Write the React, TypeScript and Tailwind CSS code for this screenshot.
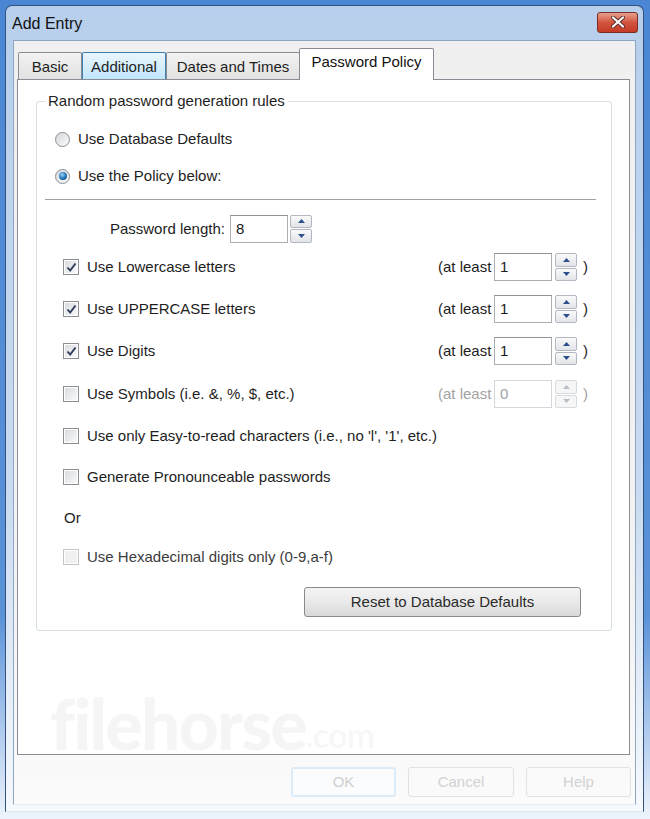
import React from 'react';

const font = "font-['Liberation_Sans',Arial,sans-serif]";

function Spinner({ disabled = false }: { disabled?: boolean }) {
  const arrow = disabled ? '#b8bec6' : '#2d4f8e';
  const half = `flex-1 flex items-center justify-center rounded-[2px] border ${
    disabled ? 'border-[#d6dbe0] bg-[#f6f6f6]' : 'border-[#b1b8c2] bg-gradient-to-b from-[#fafafa] to-[#e2e4e8]'
  }`;
  return (
    <div className="flex flex-col w-[22px] h-[28px] gap-px">
      <div className={half}>
        <svg width="7" height="4" viewBox="0 0 7 4"><path d="M0 4 L3.5 0 L7 4 Z" fill={arrow} /></svg>
      </div>
      <div className={half}>
        <svg width="7" height="4" viewBox="0 0 7 4"><path d="M0 0 L3.5 4 L7 0 Z" fill={arrow} /></svg>
      </div>
    </div>
  );
}

function NumBox({ value, width, disabled = false }: { value: string; width: string; disabled?: boolean }) {
  return (
    <div
      className={`${width} h-[28px] flex items-center pl-[5px] bg-white border ${
        disabled ? 'border-[#d4d7dc] text-[#9ea3a8]' : 'border-[#abadb3] border-t-[#8e9299] text-[#1a1a1a]'
      }`}
    >
      {value}
    </div>
  );
}

function Check({ checked = false, disabled = false }: { checked?: boolean; disabled?: boolean }) {
  return (
    <div
      className={`w-[16px] h-[16px] border flex items-center justify-center ${
        disabled ? 'border-[#c2c5c9]' : 'border-[#8b8f94]'
      }`}
    >
      <div
        className={`w-[12px] h-[12px] flex items-center justify-center ${
          disabled ? 'bg-[#f0f0f0]' : 'bg-gradient-to-br from-[#d9dcdf] to-[#f9f9fa]'
        }`}
      >
        {checked && (
          <svg width="11" height="11" viewBox="0 0 11 11">
            <path d="M1.5 5.5 L4.2 8.6 L9.5 1.5" fill="none" stroke="#2f3a5c" strokeWidth="1.9" />
          </svg>
        )}
      </div>
    </div>
  );
}

function Radio({ checked = false }: { checked?: boolean }) {
  return (
    <div className="w-[15px] h-[15px] rounded-full border border-[#8a8e93] bg-gradient-to-br from-[#d6d8db] to-[#fbfbfb] flex items-center justify-center">
      {checked && (
        <div className="w-[8px] h-[8px] rounded-full bg-[radial-gradient(circle_at_40%_35%,#9fd6f7,#1f6fb5_55%,#0b3d73)]" />
      )}
    </div>
  );
}

function AtLeast({ value, disabled = false }: { value: string; disabled?: boolean }) {
  const c = disabled ? 'text-[#a3a3a3]' : 'text-[#1e1e1e]';
  return (
    <div className="ml-auto flex items-center">
      <span className={`w-[56px] ${c}`}>(at least</span>
      <NumBox value={value} width="w-[58px]" disabled={disabled} />
      <div className="ml-[3px]">
        <Spinner disabled={disabled} />
      </div>
      <span className={`ml-[6px] ${c}`}>)</span>
    </div>
  );
}

function CheckRow({
  label,
  checked = false,
  disabled = false,
  atLeast,
  atLeastDisabled = false,
  className = '',
}: {
  label: string;
  checked?: boolean;
  disabled?: boolean;
  atLeast?: string;
  atLeastDisabled?: boolean;
  className?: string;
}) {
  return (
    <div className={`h-[28px] flex items-center pl-[26px] pr-[23px] ${className}`}>
      <Check checked={checked} disabled={disabled} />
      <span className={`ml-[8px] ${disabled ? 'text-[#3c3c3c]' : 'text-[#1e1e1e]'}`}>{label}</span>
      {atLeast !== undefined && <AtLeast value={atLeast} disabled={atLeastDisabled} />}
    </div>
  );
}

function Tab({ label, variant }: { label: string; variant: 'normal' | 'hover' | 'active' }) {
  if (variant === 'active') {
    return (
      <div className="relative z-10 -ml-px h-[32px] w-[135px] bg-white border border-b-0 border-[#898c95] rounded-t-[2px] flex items-start justify-center pt-[4px] text-[#111]">
        {label}
      </div>
    );
  }
  const look =
    variant === 'hover'
      ? 'border-[#3c7fb1] bg-gradient-to-b from-[#eaf6fd] to-[#bee6fd]'
      : 'border-[#898c95] bg-gradient-to-b from-[#f2f2f2] to-[#e1e1e1]';
  return (
    <div className={`-ml-px first:ml-0 h-[28px] border border-b-0 rounded-t-[2px] flex items-center justify-center ${look}`}>
      {label}
    </div>
  );
}

export default function App() {
  return (
    <div className={`relative w-[650px] h-[819px] overflow-hidden bg-gradient-to-b from-[#4a86d3] via-[#5a92d8] via-75% to-[#eef4fb] pt-[5px] px-[5px] ${font} text-[15px] leading-[18px] text-[#1e1e1e]`}>
      {/* window */}
      <div className="w-[639px] h-[807px] rounded-t-[7px] border border-[#34527d] border-b-[#dfe7f1] bg-gradient-to-b from-[#b7cfec] via-[#c9dbf0] via-60% to-[#f6f9fd] flex flex-col">
        {/* title bar */}
        <div className="h-[34px] flex items-center justify-between pl-[6px] pr-[5px]">
          <span className="text-[16px] text-[#111] mt-[2px]">Add Entry</span>
          <div className="w-[41px] h-[21px] mt-[-2px] rounded-[3px] border border-[#7b2e24] bg-gradient-to-b from-[#e5a08f] via-[#d2533e] via-50% to-[#c43b26] flex items-center justify-center">
            <svg width="14" height="12" viewBox="0 0 14 12">
              <path d="M2 1.5 L12 10.5 M12 1.5 L2 10.5" stroke="#5b2a26" strokeWidth="4" strokeLinecap="round" />
              <path d="M2 1.5 L12 10.5 M12 1.5 L2 10.5" stroke="#ffffff" strokeWidth="2.2" strokeLinecap="round" />
            </svg>
          </div>
        </div>

        {/* client area */}
        <div className="mx-[7px] h-[765px] border border-[#8fa6c2] border-b-[#e8edf3] bg-gradient-to-b from-[#f0f0f0] via-[#f3f3f3] via-75% to-[#fbfbfb] flex flex-col">
          {/* tabs */}
          <div className="mt-[7px] ml-[4px] flex items-end h-[32px]">
            <div className="w-[64px]"><Tab label="Basic" variant="normal" /></div>
            <div className="w-[84px]"><Tab label="Additional" variant="hover" /></div>
            <div className="w-[134px]"><Tab label="Dates and Times" variant="normal" /></div>
            <Tab label="Password Policy" variant="active" />
          </div>

          {/* tab panel */}
          <div className="-mt-px ml-[3px] mr-[5px] h-[676px] bg-white border border-[#898c95] px-[17px] pt-[12px]">
            <fieldset className="ml-px border border-[#d5dfe5] rounded-[3px] pb-[13px]">
              <legend className="ml-[8px] px-[3px] leading-[18px] text-[#1e1e1e]">Random password generation rules</legend>

              <div className="mt-[19px] h-[20px] flex items-center pl-[18px]">
                <Radio />
                <span className="ml-[8px]">Use Database Defaults</span>
              </div>
              <div className="mt-[17px] h-[20px] flex items-center pl-[18px]">
                <Radio checked />
                <span className="ml-[8px]">Use the Policy below:</span>
              </div>

              <div className="mt-[13px] ml-[8px] mr-[15px] border-t border-[#a0a0a0] border-b border-b-white" />

              <div className="mt-[14px] h-[27px] flex items-center">
                <div className="w-[193px] pr-[5px] text-right">Password length:</div>
                <NumBox value="8" width="w-[58px]" />
                <div className="ml-[2px]">
                  <Spinner />
                </div>
              </div>

              <CheckRow className="mt-[11px]" label="Use Lowercase letters" checked atLeast="1" />
              <CheckRow className="mt-[14px]" label="Use UPPERCASE letters" checked atLeast="1" />
              <CheckRow className="mt-[14px]" label="Use Digits" checked atLeast="1" />
              <CheckRow className="mt-[15px]" label="Use Symbols (i.e. &, %, $, etc.)" atLeast="0" atLeastDisabled />
              <CheckRow className="mt-[14px]" label="Use only Easy-to-read characters (i.e., no  'l', '1', etc.)" />
              <CheckRow className="mt-[13px]" label="Generate Pronounceable passwords" />

              <div className="mt-[13px] h-[28px] flex items-center pl-[27px]">Or</div>

              <CheckRow className="mt-[11px]" label="Use Hexadecimal digits only (0-9,a-f)" disabled />

              <div className="mt-[16px] flex justify-end pr-[30px]">
                <div className="w-[277px] h-[30px] rounded-[3px] border border-[#8a8a8a] bg-gradient-to-b from-[#f4f4f4] via-[#e9e9e9] via-50% to-[#d9d9d9] flex items-center justify-center text-[#2b2b2b]">
                  Reset to Database Defaults
                </div>
              </div>
            </fieldset>
          </div>

          {/* dialog buttons */}
          <div className="mt-[12px] flex justify-end gap-[12px] pr-[4px]">
            <div className="w-[105px] h-[30px] rounded-[3px] border-2 border-[#dcebf7] bg-[#fbfcfd] flex items-center justify-center text-[#cfcfcf]">OK</div>
            <div className="w-[106px] h-[30px] rounded-[3px] border border-[#e2e2e2] bg-[#fafafa] flex items-center justify-center text-[#d2d2d2]">Cancel</div>
            <div className="w-[105px] h-[30px] rounded-[3px] border border-[#e2e2e2] bg-[#fafafa] flex items-center justify-center text-[#d2d2d2]">Help</div>
          </div>
        </div>
      </div>

      {/* watermark overlay */}
      <div className="absolute left-[50px] top-[688px] flex items-end pointer-events-none font-['Lato',sans-serif] font-black text-black/[0.04] tracking-[-2px]">
        <span className="text-[70px] leading-[70px]">filehorse</span>
        <span className="text-[34px] leading-[46px] font-bold tracking-[-1px]">.com</span>
      </div>
    </div>
  );
}
